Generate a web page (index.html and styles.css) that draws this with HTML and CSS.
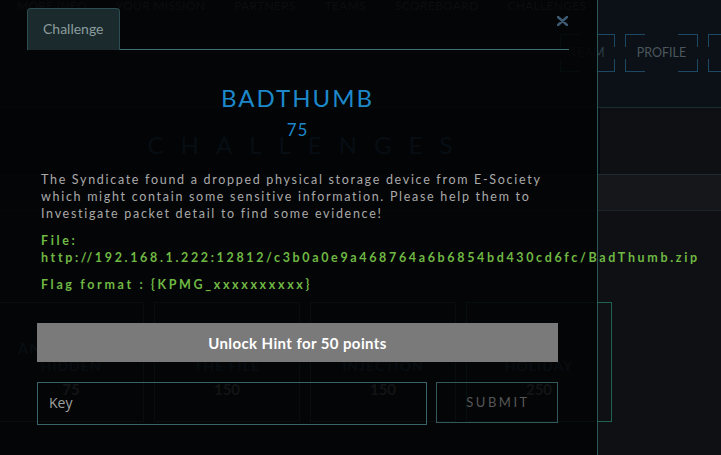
FILE: index.html
```html
<!DOCTYPE html>
<html>
<head>
<meta charset="utf-8">
<link rel="stylesheet" href="styles.css">
</head>
<body>
<div class="page">
  <nav class="nav">
    <span>MORE INFO</span><span>YOUR MISSION</span><span>PARTNERS</span><span>TEAMS</span><span>SCOREBOARD</span><span>CHALLENGES</span>
  </nav>
  <div class="userbar">
    <a class="cbtn team">TEAM</a><a class="cbtn">PROFILE</a><a class="cbtn">LOGOUT</a>
  </div>
  <section class="hero"><h1>CHALLENGES</h1></section>
  <div class="filters"></div>
  <section class="board">
    <div class="grid">
      <div class="card"><div class="c-cat">ANTI DETECT</div><div class="c-name">HIDDEN</div><div class="c-pts">75</div></div>
      <div class="card"><div class="c-cat">FORENSIC</div><div class="c-name">THE FILE</div><div class="c-pts">150</div></div>
      <div class="card"><div class="c-cat">WEB</div><div class="c-name">INJECTION</div><div class="c-pts">150</div></div>
      <div class="card solved"><div class="c-cat">MISC</div><div class="c-name">HOLIDAY</div><div class="c-pts">250</div></div>
    </div>
  </section>
</div>

<div class="modal">
  <div class="m-head">
    <div class="tab">Challenge</div>
    <div class="tabline">
      <svg class="close" width="11" height="10" viewBox="0 0 11 10"><path d="M1 1L10 9M10 1L1 9" stroke="#3e5a72" stroke-width="2.4" stroke-linecap="round"/></svg>
    </div>
  </div>
  <div class="m-body">
    <h2 class="m-title">BADTHUMB</h2>
    <div class="m-pts">75</div>
    <p class="m-desc">The Syndicate found a dropped physical storage device from E-Society which might contain some sensitive information. Please help them to Investigate packet detail to find some evidence!</p>
    <p class="m-green">File:<br><span class="url">http://192.168.1.222:12812/c3b0a0e9a468764a6b6854bd430cd6fc/BadThumb.zip</span></p>
    <p class="m-green">Flag format : {KPMG_xxxxxxxxxx}</p>
    <button class="hint">Unlock Hint for 50 points</button>
    <div class="submit-row">
      <input class="key" type="text" placeholder="Key">
      <button class="submit">SUBMIT</button>
    </div>
  </div>
</div>
</body>
</html>
```
FILE: styles.css
```css
html, body {
  margin: 0;
  padding: 0;
}
body {
  width: 721px;
  height: 455px;
  overflow: hidden;
  background: #0e1013;
  font-family: Lato, "Open Sans", sans-serif;
  position: relative;
}
.page {
  display: flex;
  flex-direction: column;
  height: 455px;
}
.nav {
  display: flex;
  gap: 29px;
  height: 20px;
  margin-top: -2px;
  padding-left: 17px;
  background: #0b1116;
  font-size: 12px;
  line-height: 16px;
  letter-spacing: 0.3px;
  color: #505559;
  white-space: nowrap;
}
.userbar {
  display: flex;
  gap: 10px;
  height: 90px;
  box-sizing: border-box;
  padding: 16px 0 0 560px;
  background: #0b1116;
  border-bottom: 1px solid #1a2c33;
  overflow: hidden;
}
.cbtn {
  flex: none;
  height: 38px;
  padding: 0 12px;
  line-height: 38px;
  font-size: 12.5px;
  color: #4c565e;
  --c: #1d4863;
  background:
    linear-gradient(var(--c), var(--c)) left top / 20px 1px no-repeat,
    linear-gradient(var(--c), var(--c)) left top / 1px 13px no-repeat,
    linear-gradient(var(--c), var(--c)) right top / 20px 1px no-repeat,
    linear-gradient(var(--c), var(--c)) right top / 1px 13px no-repeat,
    linear-gradient(var(--c), var(--c)) left bottom / 20px 1px no-repeat,
    linear-gradient(var(--c), var(--c)) left bottom / 1px 13px no-repeat,
    linear-gradient(var(--c), var(--c)) right bottom / 20px 1px no-repeat,
    linear-gradient(var(--c), var(--c)) right bottom / 1px 13px no-repeat;
}
.cbtn.team {
  padding: 0 10px;
  color: #2e3e48;
}
.hero {
  height: 66px;
  background: #040a10;
  width: 600px;
}
.hero h1 {
  margin: 0;
  padding: 22px 0 0 17px;
  text-align: center;
  font-size: 24px;
  font-weight: 400;
  line-height: 30px;
  letter-spacing: 17px;
  color: #27527a;
}
.filters {
  height: 35px;
  background: #15171a;
  border-top: 1px solid #1c2c32;
  border-bottom: 1px solid #1c262a;
}
.board {
  flex: 1;
  padding-top: 91px;
}
.grid {
  display: flex;
  gap: 10px;
  margin-left: -2px;
}
.card {
  width: 146px;
  height: 120px;
  box-sizing: border-box;
  border: 1px solid #35595a;
  text-align: center;
  padding-top: 36px;
  font-weight: 700;
}
.card.solved {
  border-color: #1d6450;
}
.c-cat {
  font-size: 15px;
  line-height: 18px;
  color: #2a4862;
  letter-spacing: 1px;
}
.c-name {
  font-size: 14px;
  line-height: 17px;
  color: #2a4862;
  letter-spacing: 1px;
}
.c-pts {
  margin-top: 6px;
  font-size: 15px;
  line-height: 18px;
  color: #80868c;
}

/* modal */
.modal {
  position: absolute;
  top: 0;
  left: 0;
  width: 597px;
  height: 455px;
  background: rgba(2, 3, 4, 0.88);
  border-right: 1px solid #2d5659;
}
.m-head {
  display: flex;
  padding: 8px 28px 0 27px;
}
.tab {
  height: 42px;
  box-sizing: border-box;
  padding: 0 15px;
  line-height: 40px;
  font-size: 14px;
  color: #8c9c9e;
  background: #1a2a2d;
  border: 1px solid #2c4e52;
  border-bottom: none;
  border-radius: 4px 4px 0 0;
}
.tabline {
  flex: 1;
  height: 42px;
  box-sizing: border-box;
  border-bottom: 1px solid #3e6f74;
  display: flex;
  justify-content: flex-end;
  align-items: flex-start;
  padding: 8px 1px 0 0;
}
.m-body {
  padding: 0 39px 0 37px;
  text-align: center;
}
.m-title {
  margin: 33px 0 0;
  font-size: 24px;
  font-weight: 400;
  line-height: 29px;
  letter-spacing: 2px;
  color: #1d88ca;
}
.m-pts {
  margin-top: 8px;
  font-size: 17px;
  line-height: 20px;
  letter-spacing: 1px;
  color: #1d88ca;
}
.m-desc {
  margin: 31px 0 0;
  padding-left: 4px;
  text-align: left;
  font-size: 12.5px;
  line-height: 17px;
  letter-spacing: 1.7px;
  color: #a9a9a9;
}
.m-green {
  margin: 10px 0 0;
  padding-left: 4px;
  text-align: left;
  font-size: 12.5px;
  line-height: 17px;
  letter-spacing: 2.65px;
  font-weight: 700;
  color: #70b844;
  white-space: nowrap;
}
.hint {
  display: block;
  width: 100%;
  height: 39px;
  margin-top: 30px;
  border: none;
  background: #7a7a7a;
  color: #ffffff;
  font-family: Lato, sans-serif;
  font-weight: 700;
  font-size: 15px;
  letter-spacing: 0.4px;
}
.submit-row {
  display: flex;
  gap: 9px;
  margin-top: 20px;
  align-items: flex-start;
}
.key {
  width: 390px;
  height: 43px;
  box-sizing: border-box;
  padding: 0 11px 2px;
  background: transparent;
  border: 1px solid #3a6568;
  font-family: "Open Sans", sans-serif;
  font-size: 14px;
  color: #a0a0a0;
  outline: none;
}
.key::placeholder {
  color: #a0a0a0;
}
.submit {
  width: 122px;
  height: 41px;
  box-sizing: border-box;
  background: transparent;
  border: 1px solid #33595c;
  font-family: Lato, sans-serif;
  font-size: 13px;
  letter-spacing: 2.5px;
  color: #575757;
  padding: 0 0 1px 2px;
}
```
